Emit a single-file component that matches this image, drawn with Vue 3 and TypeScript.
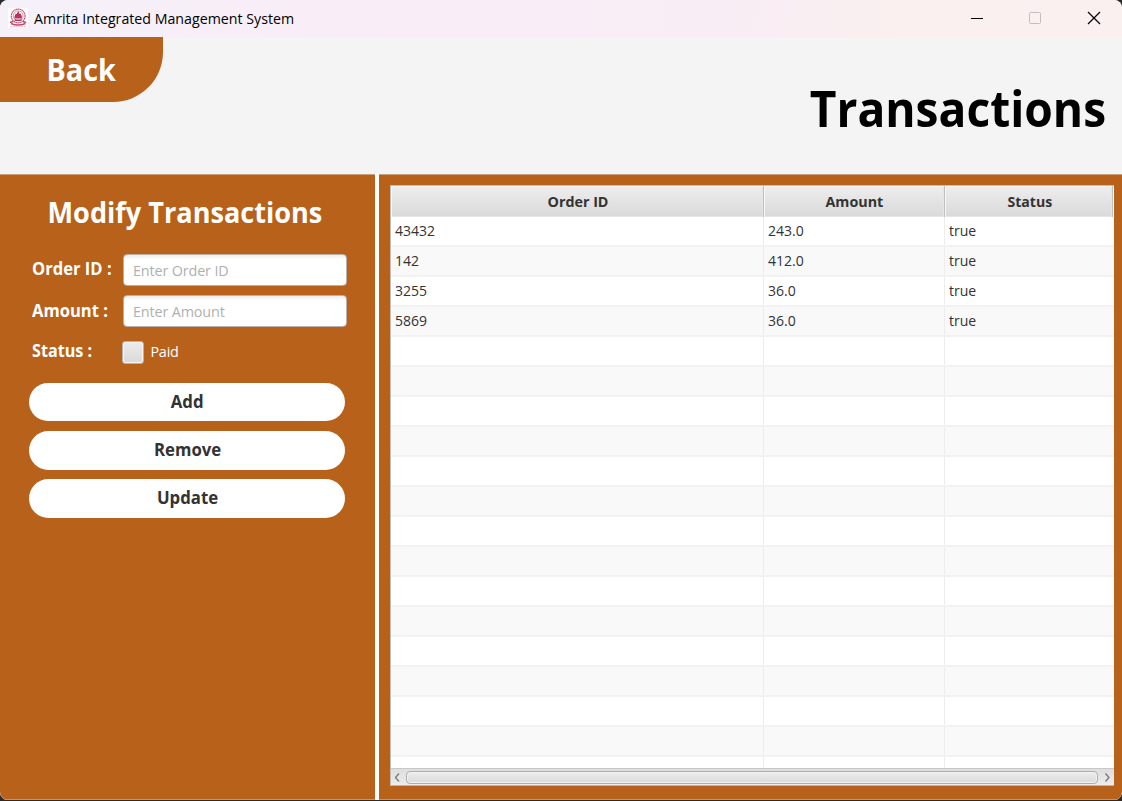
<script setup lang="ts">
import { ref } from 'vue'

interface Transaction {
  orderId: string
  amount: string
  status: string
}

const transactions: Transaction[] = [
  { orderId: '43432', amount: '243.0', status: 'true' },
  { orderId: '142', amount: '412.0', status: 'true' },
  { orderId: '3255', amount: '36.0', status: 'true' },
  { orderId: '5869', amount: '36.0', status: 'true' },
]
const emptyRows = 15
const orderId = ref('')
const amount = ref('')
</script>

<template>
  <div class="desktop">
    <div class="window">
      <header class="titlebar">
        <svg class="logo" width="20" height="20" viewBox="0 0 20 20">
          <rect width="20" height="20" fill="#fff" />
          <g fill="none" stroke="#c4486c">
            <circle cx="10.2" cy="8" r="6.9" stroke-width="1.1" stroke-dasharray="1.6 .4" />
            <circle cx="10.2" cy="7.8" r="4.9" stroke-width=".6" />
            <path d="M2 14.2q2 .2 3.2-1M18.2 14.2q-2 .2-3.2-1M3 15.4q7 3.2 14.400 0" stroke-width="1.6" />
            <path d="M2.200 18.700h16" stroke-width=".7" stroke-dasharray="2 .7" opacity=".6" />
          </g>
          <path d="M6.500 8.500l1.200-3 1 .5 1.500-3 1.500 3 1-.5 1.200 3v2h-7.400zM6 11.500h8.400l-1.200 1.500h-6z" fill="#b53560" />
        </svg>
        <span class="app-name"><span class="t-app">Amrita Integrated Management System</span></span>
        <div class="controls">
          <svg width="14" height="14" viewBox="0 0 14 14"><path d="M2 7.500h12" stroke="#000" /></svg>
          <svg width="14" height="14" viewBox="0 0 14 14"><rect x="1.500" y="1.500" width="11" height="11" rx="1" fill="none" stroke="#c4bec0" /></svg>
          <svg width="14" height="14" viewBox="0 0 14 14"><path d="M1 1l12 12M13 1l-12 12" stroke="#000" stroke-width="1.200" /></svg>
        </div>
      </header>

      <section class="banner">
        <button class="back"><span class="t-back">Back</span></button>
        <h1><span class="t-title">Transactions</span></h1>
      </section>

      <main class="content">
        <aside class="side">
          <h2><span class="t-modify">Modify Transactions</span></h2>
          <form class="form" @submit.prevent>
            <div class="field">
              <label><span class="t-order">Order ID :</span></label>
              <input v-model="orderId" class="text-input" placeholder="Enter Order ID" />
            </div>
            <div class="field amount">
              <label><span class="t-amount">Amount :</span></label>
              <input v-model="amount" class="text-input" placeholder="Enter Amount" />
            </div>
            <div class="field status">
              <label><span class="t-status">Status :</span></label>
              <span class="check"></span>
              <span class="paid">Paid</span>
            </div>
            <div class="actions">
              <button><span>Add</span></button>
              <button><span>Remove</span></button>
              <button><span>Update</span></button>
            </div>
          </form>
        </aside>

        <section class="table-pane">
          <div class="table">
            <div class="thead">
              <div><span>Order ID</span></div>
              <div><span>Amount</span></div>
              <div><span>Status</span></div>
            </div>
            <div class="tbody">
              <div v-for="row in transactions" :key="row.orderId" class="row">
                <div><span>{{ row.orderId }}</span></div>
                <div><span>{{ row.amount }}</span></div>
                <div><span>{{ row.status }}</span></div>
              </div>
              <div v-for="n in emptyRows" :key="n" class="row"><div></div><div></div><div></div></div>
            </div>
            <div class="scrollbar">
              <svg width="15" height="16" viewBox="0 0 15 16"><path d="M8 4.500L4.500 8.500l3.500 4" fill="none" stroke="#777" stroke-width="1.300" /></svg>
              <div class="thumb"></div>
              <svg width="16" height="16" viewBox="0 0 16 16"><path d="M7.500 4.500l3.500 4-3.500 4" fill="none" stroke="#777" stroke-width="1.300" /></svg>
            </div>
          </div>
        </section>
      </main>
    </div>
  </div>
</template>

<style>
body { margin: 0; overflow: hidden; }
</style>

<style scoped>
* { box-sizing: border-box; }
.desktop { width: 1122px; height: 801px; background: #2b2b2b; font-family: "Open Sans", "Noto Sans", sans-serif; color: #333; }
.window { height: 800px; display: flex; flex-direction: column; border-radius: 8px; overflow: hidden; background: #f4f4f4; }
span { white-space: nowrap; }
.titlebar { height: 37px; flex: none; display: flex; align-items: center; padding-left: 8px; background: linear-gradient(100deg, #f5f1f9 0%, #f8eef8 25%, #f9edf5 65%, #f9f0ef 80%, #f9f0ef 100%); }
.logo { margin-top: -2px; }
.app-name { margin-left: 6px; margin-top: -2px; font-size: 14.7px; color: #000; line-height: 36px; }
.app-name span, .banner span, .side h2 span, .side label span, .actions span, .table span { display: inline-block; }
.t-app { transform: scaleX(.967); transform-origin: left; }
.t-back { transform: scaleX(.96); }
.t-title { transform: scaleX(.923); transform-origin: right; }
.t-modify { transform: scaleX(.968); }
.field label span { transform-origin: left; transform: scaleX(.975); }
.field label .t-status { transform: scaleX(.95); }
.controls { margin-left: auto; display: flex; gap: 45px; padding-right: 21px; margin-top: -1px; }
.controls svg { display: block; }
.banner { height: 137px; flex: none; display: flex; justify-content: space-between; }
button { border: 0; padding: 0; font-family: inherit; font-weight: 700; }
.back { width: 163px; height: 65px; border-radius: 0 0 50px 0; background: #b8611b; color: #fff; font-size: 30px; line-height: 65px; }
h1 { margin: 0; padding: 37px 16px 0 0; color: #000; font-size: 50px; line-height: 68px; font-weight: 700; }
.content { flex: 1; display: flex; gap: 4px; background: #fff; }
.side, .table-pane { background: #b8611b; border-top: 1px solid #c9a07c; border-bottom: 1px solid #d59256; }
.side { width: 375px; color: #fff; }
h2 { margin: 16px 0 1px; font-size: 28px; line-height: 42px; font-weight: 700; text-align: center; padding-right: 6px; }
.form { padding: 20px 28px 0 29px; }
.field { display: flex; height: 41px; padding-left: 2.5px; }
.field label { width: 91.2px; flex: none; font-size: 17px; line-height: 30px; font-weight: 700; }
.amount label { line-height: 32px; }
.text-input { width: 224px; height: 32px; flex: none; border: 1px solid #b9b0aa; border-radius: 4px; background: linear-gradient(#eee, #fff 5px); padding: 0 9.300px; font: 14.400px "Open Sans", sans-serif; letter-spacing: -.15px; color: #333; outline: 0; }
.text-input::placeholder { color: #b0b0b0; opacity: 1; }
.status { padding-top: 5px; height: 47px; }
.status label { line-height: 20px; width: 90.900px; }
.check { width: 22px; height: 23px; border: 1px solid #b8b0aa; border-radius: 3px; background: linear-gradient(#ececec, #d9d9d9); box-shadow: inset 0 0 0 1px #f5f5f5; }
.paid { font-size: 14.400px; letter-spacing: -.2px; line-height: 22px; margin-left: 6px; }
.actions { display: grid; gap: 9.750px; width: 316px; }
.actions button { height: 38.400px; border-radius: 20px; background: #fff; color: #333; font-size: 17px; line-height: 38px; }
.actions span { transform: translateX(.5px) scaleX(.985); }
.table-pane { flex: 1; padding: 10px 8px 0 11px; }
.table { height: 600.500px; display: flex; flex-direction: column; background: #fff; border-left: 1px solid #c3bdb8; border-top: 1px solid #c3bdb8; border-bottom: 1px solid #c0b5ab; }
.thead, .row { display: grid; grid-template-columns: 373px 181px 1fr; }
.thead { height: 31px; flex: none; margin-right: 1px; border-bottom: 1px solid #c8c8c8; }
.thead div { text-align: center; background: linear-gradient(#eee, #d9d9d9); border-right: 1px solid #c0c0c0; box-shadow: inset 1px 1px #f7f7f7, inset -1px -1px #e6e6e6; font-size: 14.700px; font-weight: 700; line-height: 31px; }
.thead span { transform: translateX(.7px) scaleX(.975); }
.thead div:last-child span { transform: translateX(1.500px) scaleX(.96); }
.tbody { height: 551px; flex: none; overflow: hidden; }
.row { height: 30px; background: #fff; border-bottom: 2px solid #f2f2f2; }
.row:nth-child(even) { background: #f9f9f9; }
.row div { border-right: 1px solid #ededed; padding-left: 4px; font-size: 14.700px; line-height: 26px; }
.row span { transform: scaleX(.955); transform-origin: left; }
.row div:last-child { border-right: 0; }
.scrollbar { flex: 1; display: flex; align-items: center; border-top: 1px solid #c8c8c8; background: linear-gradient(#dedede, #ececec); }
.scrollbar svg { flex: none; }
.thumb { flex: 1; height: 13px; border: 1px solid #adadad; border-radius: 4px; background: linear-gradient(#ededed, #dadada); box-shadow: inset 0 0 0 1px #f2f2f2; }
</style>
